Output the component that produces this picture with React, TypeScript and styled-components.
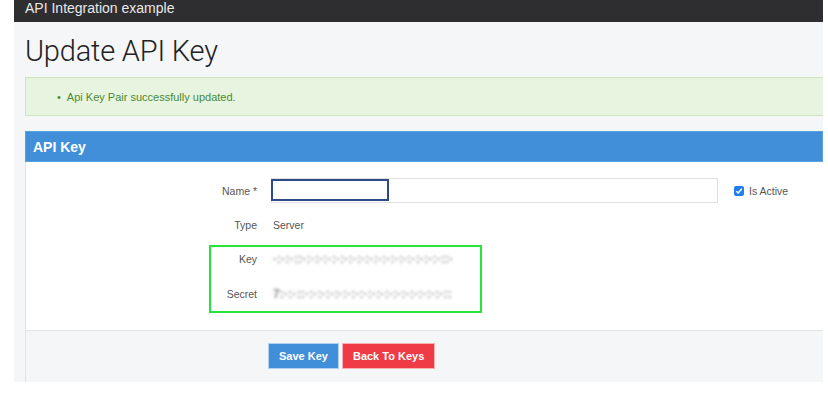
import React from "react";
import styled, { createGlobalStyle } from "styled-components";

const Global = createGlobalStyle`
  html, body { margin: 0; padding: 0; background: #fff; }
  body { font-family: "Liberation Sans", Arial, sans-serif; width: 828px; height: 393px; overflow: hidden; }
  * { box-sizing: border-box; }
`;

const Page = styled.div`
  margin-left: 14px;
  width: 809px;
  height: 382px;
  background: #f5f6f8;
  display: flex;
  flex-direction: column;
`;

const TopBar = styled.div`
  height: 22px;
  background: #2e2e31;
  color: #e8e8e8;
  font-size: 14px;
  padding-left: 11px;
  line-height: 17px;
`;

const Content = styled.div`
  padding-left: 11px;
  display: flex;
  flex-direction: column;
  flex: 1;
`;

const Title = styled.h1`
  margin: 12px 0 0 0;
  font-family: Roboto, "Liberation Sans", sans-serif;
  font-size: 29px;
  font-weight: 300;
  color: #222;
  height: 43px;
  line-height: 34px;
  letter-spacing: -0.2px;
`;

const Alert = styled.div`
  height: 39px;
  background: #e7f4df;
  border: 1px solid #cde6bd;
  border-right: none;
  color: #4c8a35;
  font-size: 11px;
  display: flex;
  align-items: center;
  padding-left: 31px;
`;

const Bullet = styled.span`
  margin-right: 6px;
`;

const Panel = styled.div`
  margin-top: 15px;
  flex: 1;
  display: flex;
  flex-direction: column;
  border-left: 1px solid #e3e4e7;
`;

const PanelHeader = styled.div`
  height: 31px;
  background: #418fd8;
  color: #fff;
  font-size: 14px;
  font-weight: 600;
  display: flex;
  align-items: center;
  padding-left: 7px;
  margin-left: -1px;
  border: 1px solid #5aa0e0;
`;

const PanelBody = styled.div`
  background: #fff;
  height: 168px;
  position: relative;
  padding-top: 16px;
`;

const Row = styled.div<{ $h: number; $mt?: number }>`
  display: grid;
  grid-template-columns: 231px 447px auto;
  column-gap: 14px;
  align-items: center;
  height: ${(p) => p.$h}px;
  margin-top: ${(p) => p.$mt ?? 0}px;
`;

const Label = styled.div`
  text-align: right;
  font-size: 10.5px;
  color: #555;
`;

const Value = styled.div`
  font-size: 10.5px;
  color: #555;
  padding-left: 2px;
`;

const Blur = styled.div`
  font-size: 12px;
  font-weight: 700;
  color: #8a8a8a;
  filter: blur(1.4px);
  letter-spacing: 0.2px;
  padding-left: 2px;
  white-space: nowrap;
`;

const InputWrap = styled.div`
  position: relative;
  height: 25px;
`;

const Input = styled.input`
  width: 447px;
  height: 25px;
  border: 1px solid #e0e0e0;
  background: #fff;
  outline: none;
  display: block;
`;

const FocusBox = styled.div`
  position: absolute;
  left: 0;
  top: 1px;
  width: 118px;
  height: 22px;
  border: 2px solid #2c4a86;
  pointer-events: none;
`;

const Check = styled.label`
  display: flex;
  align-items: center;
  gap: 5px;
  font-size: 10.5px;
  color: #555;
  padding-left: 2px;
`;

const Box = styled.span`
  width: 10px;
  height: 10px;
  border-radius: 2px;
  background: #1f7ef0;
  display: inline-flex;
  align-items: center;
  justify-content: center;
`;

const Highlight = styled.div`
  position: absolute;
  left: 183px;
  top: 83px;
  width: 273px;
  height: 68px;
  border: 2px solid #27e43a;
  pointer-events: none;
`;

const Footer = styled.div`
  flex: 1;
  border-top: 1px solid #e2e3e6;
  display: flex;
  align-items: center;
  gap: 3px;
  padding-left: 242px;
  padding-bottom: 2px;
`;

const Button = styled.button<{ $bg: string }>`
  height: 26px;
  padding: 0 10px;
  background: ${(p) => p.$bg};
  border: 1px solid rgba(255, 255, 255, 0.6);
  color: #fff;
  font-family: "Liberation Sans", Arial, sans-serif;
  font-size: 11px;
  font-weight: 700;
`;

export default function App() {
  return (
    <>
      <Global />
      <Page>
        <TopBar>API Integration example</TopBar>
        <Content>
          <Title>Update API Key</Title>
          <Alert>
            <Bullet>•</Bullet>Api Key Pair successfully updated.
          </Alert>
          <Panel>
            <PanelHeader>API Key</PanelHeader>
            <PanelBody>
              <Row $h={25}>
                <Label>Name *</Label>
                <InputWrap>
                  <Input />
                  <FocusBox />
                </InputWrap>
                <Check>
                  <Box>
                    <svg width="8" height="8" viewBox="0 0 8 8">
                      <path d="M1.3 4.2 L3.2 6 L6.8 1.8" stroke="#fff" strokeWidth="1.5" fill="none" />
                    </svg>
                  </Box>
                  Is Active
                </Check>
              </Row>
              <Row $h={21} $mt={11}>
                <Label>Type</Label>
                <Value>Server</Value>
              </Row>
              <Row $h={35} $mt={6}>
                <Label>Key</Label>
                <Blur>·:·:·::·:·:·:·:·:·:·:·:·:·:·:·:·:·:·:·:·::·</Blur>
              </Row>
              <Row $h={35}>
                <Label>Secret</Label>
                <Blur>7:·:·::·:·:·:·:·:·:·:·:·:·:·:·:·:·:·:·:·::</Blur>
              </Row>
              <Highlight />
            </PanelBody>
            <Footer>
              <Button $bg="#418fd8">Save Key</Button>
              <Button $bg="#ef3b46">Back To Keys</Button>
            </Footer>
          </Panel>
        </Content>
      </Page>
    </>
  );
}
